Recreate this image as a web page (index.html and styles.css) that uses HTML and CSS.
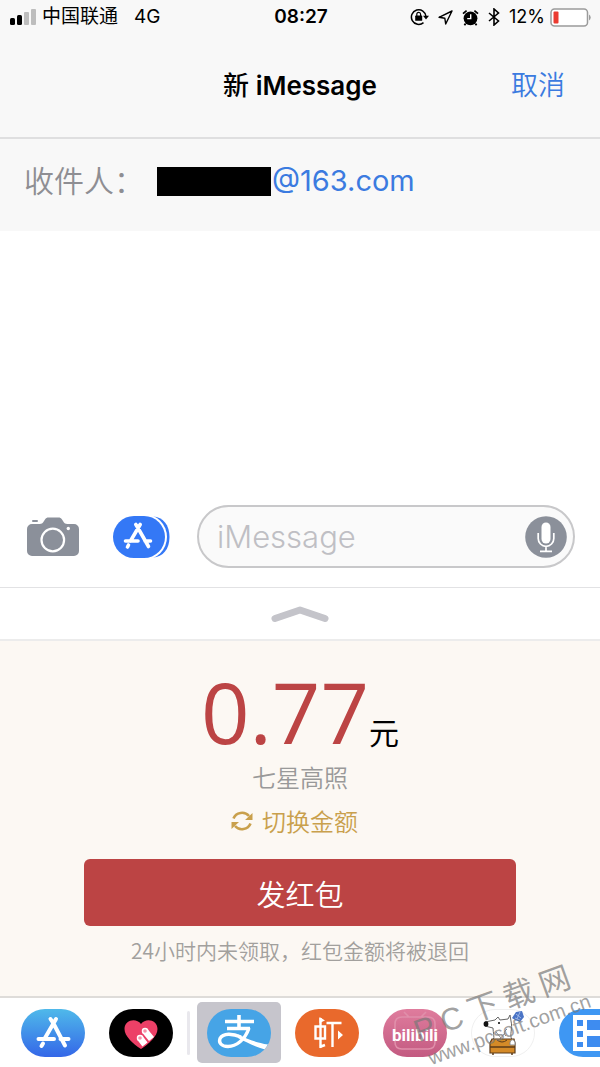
FILE: index.html
```html
<!DOCTYPE html>
<html lang="zh-CN">
<head>
    <meta charset="UTF-8">
    <meta name="viewport" content="width=device-width, initial-scale=1.0">
    <title>新 iMessage</title>
    <link rel="stylesheet" href="styles.css">
</head>
<body>
    <div class="status">
        <div class="status-left">
            <svg width="26" height="16" viewBox="0 0 26 16">
                <rect x="0" y="9" width="5" height="7" rx="1.5" fill="#000"/>
                <rect x="7" y="6" width="5" height="10" rx="1.5" fill="#000"/>
                <rect x="14" y="3" width="5" height="13" rx="1" fill="#bdbdbd"/>
                <rect x="21" y="0" width="5" height="16" rx="1" fill="#bdbdbd"/>
            </svg>
            <span>中国联通</span>
            <span class="network">4G</span>
        </div>
        <span class="time">08:27</span>
        <div class="status-right">
            <svg width="19" height="18" viewBox="0 0 19 18" fill="none" stroke="#000" stroke-width="1.5">
                <path d="M13.5 14.6A7.3 7.3 0 1 1 16 8.5"/>
                <path d="M13 7.8h6l-3 3.8z" fill="#000" stroke="none"/>
                <rect x="5.2" y="7.6" width="7" height="5.2" rx=".6" fill="#000" stroke="none"/>
                <path d="M6.8 8V6.2a1.9 1.9 0 0 1 3.8 0V8" stroke-width="1.2"/>
            </svg>
            <svg width="15" height="15" viewBox="0 0 15 15" fill="none" stroke="#000" stroke-width="1.4" stroke-linejoin="round">
                <path d="M14 1L1 7.3l5.8.9.9 5.8z"/>
            </svg>
            <svg width="17" height="17" viewBox="0 0 17 17">
                <circle cx="8.5" cy="9.3" r="6.9"/>
                <path d="M1 4.6L4.6 1.6M12.4 1.6L16 4.6M3.6 14.6L2.4 16.2M13.4 14.6L14.6 16.2" stroke="#000" stroke-width="1.8"/>
                <path d="M8.7 5.2V9.6H5.2" fill="none" stroke="#fff" stroke-width="1.4"/>
            </svg>
            <svg width="12" height="18" viewBox="0 0 12 18" fill="none" stroke="#000" stroke-width="1.6">
                <path d="M1 5l9.500 8L6 17V1l4.500 4L1 13"/>
            </svg>
            <span>12%</span>
            <svg class="battery" width="42" height="19" viewBox="0 0 42 19">
                <rect x="1" y="1" width="36.5" height="17" rx="3.5" fill="#fff" stroke="#9b9b9b" stroke-width="1.5"/>
                <rect x="3.5" y="3.5" width="5" height="12" rx="1" fill="#eb3b31"/>
                <path d="M39 6.5a3.5 3.5 0 0 1 0 6z" fill="#9b9b9b"/>
            </svg>
        </div>
    </div>

    <header class="nav">
        <h1><span>新</span> iMessage</h1>
        <button class="cancel">取消</button>
    </header>

    <div class="recipient">
        <span class="recipient-label">收件人：</span>
        <span class="redacted"></span>
        <a href="#">@163.com</a>
    </div>

    <main class="messages"></main>

    <form class="composer">
        <button type="button" aria-label="相机">
            <svg width="52" height="40" viewBox="0 0 52 40">
                <path d="M5 7H12.500C15 7 16 6 17 4L18 2.500C19 1 20 .5 21.500.5H31.500C33 .5 34 1 35 2.500L36 4C37 6 38 7 40.500 7H47A5 5 0 0 1 52 12V34A5 5 0 0 1 47 39H5A5 5 0 0 1 0 34V12A5 5 0 0 1 5 7Z" fill="#8b909a"/>
                <rect x="5" y="3" width="6" height="2" rx="1" fill="#8b909a"/>
                <circle cx="25.8" cy="23" r="11.3" fill="none" stroke="#fff" stroke-width="2.2"/>
                <circle cx="41.3" cy="11.5" r="1.7" fill="#fff"/>
            </svg>
        </button>
        <button type="button" aria-label="应用">
            <svg width="58" height="44" viewBox="0 0 58 44">
                <path d="M40 1.500C50 2 56.500 10 56.500 22S50 42 40 42.500z" fill="#3478f6"/>
                <rect x="-1" y="-1" width="55" height="46" rx="23" fill="#fff"/>
                <rect x="0" y="1" width="52" height="42" rx="21" fill="#3478f6"/>
                <path d="M22.800 9.500L25 13L35.500 31.500M27.200 9.500L17.500 26M12.500 26H25M32 26H37.500M15.500 30L14.500 32" fill="none" stroke="#fff" stroke-width="3.6" stroke-linecap="round"/>
            </svg>
        </button>
        <div class="field">
            <input type="text" placeholder="iMessage" aria-label="iMessage">
            <button type="button" aria-label="语音">
                <svg width="42" height="42" viewBox="0 0 42 42">
                    <circle cx="21" cy="21" r="20.8" fill="#8b909a"/>
                    <rect x="16.5" y="6.5" width="9" height="21" rx="4.5" fill="#fff"/>
                    <path d="M13.200 17v5.500a7.800 7.800 0 0 0 15.600 0V17M21 30.500V35M15 35.300H27" fill="none" stroke="#fff" stroke-width="1.7"/>
                </svg>
            </button>
        </div>
    </form>

    <button class="handle" aria-label="展开">
        <svg width="58" height="18" viewBox="0 0 58 18">
            <path d="M4 13.500L29 5L54 13.500" fill="none" stroke="#c4c4ca" stroke-width="7" stroke-linecap="round" stroke-linejoin="round"/>
        </svg>
    </button>

    <section class="packet">
        <p class="amount">0.77<span>元</span></p>
        <p class="blessing">七星高照</p>
        <button class="switch">
            <svg width="22" height="22" viewBox="0 0 22 22" fill="none" stroke="#c9a04c" stroke-width="2.6">
                <path d="M2.500 8.500A9 8.500 0 0 1 18 6M19.500 13.500A9 8.500 0 0 1 4 16"/>
                <path d="M21.500 3V10H14zM.5 19V12H8z" fill="#c9a04c" stroke="none"/>
            </svg>
            切换金额
        </button>
        <button class="send">发红包</button>
        <p class="note">24小时内未领取，红包金额将被退回</p>
    </section>

    <nav class="tray">
        <a class="app" href="#" aria-label="App Store">
            <svg width="64" height="48" viewBox="0 0 64 48">
                <defs>
                    <linearGradient id="store" x1="0" y1="0" x2="0" y2="1">
                        <stop offset="0" stop-color="#4fb9ea"/>
                        <stop offset="1" stop-color="#3467e8"/>
                    </linearGradient>
                </defs>
                <rect width="64" height="48" rx="24" fill="url(#store)"/>
                <path d="M29.500 10L32.500 14.500L44 36.500M35 10L24 29M17.500 30H33M39.500 30H47.500M22 34.500L20.500 37" fill="none" stroke="#fff" stroke-width="4" stroke-linecap="round"/>
            </svg>
        </a>
        <a class="app" href="#" aria-label="Digital Touch">
            <svg width="64" height="48" viewBox="0 0 64 48">
                <rect width="64" height="48" rx="24" fill="#000"/>
                <path d="M32 40C24 35 15.500 27 15.500 20C15.500 11 27 8.500 32 15C37 8.500 48.500 11 48.500 20C48.500 27 40 35 32 40z" fill="#ec4067"/>
                <g stroke="#fff" stroke-width="6.5">
                    <path d="M31 29L36 35.500M36 22L42.500 30"/>
                    <path d="M31 29h.1M36 22h.1" stroke-linecap="round"/>
                </g>
                <circle cx="31" cy="29" r="1.8" fill="#f494aa"/>
                <circle cx="36" cy="22" r="1.8" fill="#f494aa"/>
            </svg>
        </a>
        <span class="divider"></span>
        <a class="app selected" href="#" aria-label="支付宝">
            <svg width="64" height="48" viewBox="0 0 64 48">
                <defs>
                    <clipPath id="pill"><rect width="64" height="48" rx="24"/></clipPath>
                </defs>
                <rect width="64" height="48" rx="24" fill="#46a4e6"/>
                <g clip-path="url(#pill)" fill="none" stroke="#fff">
                    <path d="M32 6V19M18 12.500H47M20 19.500H43" stroke-width="3.6"/>
                    <path d="M42 19C38 31 29 37.500 21 37.500C14 37.500 11.500 33.500 13 29.500C16 23.500 26 24.500 34 28" stroke-width="3.4"/>
                    <path d="M31 25.500C40 30 49 33.500 61 35.500L58 40.500C48 38 39 33 31 29z" fill="#fff" stroke="none"/>
                </g>
            </svg>
        </a>
        <a class="app" href="#" aria-label="虾米音乐">
            <svg width="64" height="48" viewBox="0 0 64 48">
                <rect width="64" height="48" rx="24" fill="#e9692c"/>
                <path d="M25.500 9V39M20.500 17.500H30V29.500H20.500zM24.500 38L30 36M31.500 14H46.500M37.500 14V38" fill="none" stroke="#fff" stroke-width="2.4"/>
                <path d="M24.500 8L30 11.500L24.500 14zM43 21.500L48 26L43 30.500z" fill="#fff"/>
            </svg>
        </a>
        <a class="app" href="#" aria-label="bilibili">
            <svg width="64" height="48" viewBox="0 0 64 48">
                <defs>
                    <linearGradient id="bili" x1="0" y1="0" x2="0" y2="1">
                        <stop offset="0" stop-color="#df7c9d"/>
                        <stop offset="1" stop-color="#c35a81"/>
                    </linearGradient>
                </defs>
                <rect width="64" height="48" rx="24" fill="url(#bili)"/>
                <path d="M21 3L26 8M43 3L38 8M19 8H45Q52 8 52 15V33Q52 40 45 40H19Q12 40 12 33V15Q12 8 19 8z" fill="none" stroke="#e08faa" stroke-width="1.6"/>
                <text class="bili-text" x="32" y="32" text-anchor="middle">bilibili</text>
            </svg>
        </a>
        <a class="app" href="#" aria-label="贴纸">
            <svg width="64" height="48" viewBox="0 0 64 48">
                <rect x=".5" y=".5" width="63" height="47" rx="23.5" fill="#fff" stroke="#f0f0f0"/>
                <path d="M14 13L24 11L27 8L29 11L37 10L39 6L40 12C42 20 38 25 41 31L22 32C24 27 22 24 22 19L14 17z" fill="#fff" stroke="#666" stroke-width="1"/>
                <ellipse cx="15" cy="15" rx="2.4" ry="2.8" fill="#111"/>
                <circle cx="28" cy="14" r="1"/>
                <path d="M25 23L30 29M34 24L28 31M36 20Q31 24 35 27" fill="none" stroke="#888"/>
                <path d="M41 9L45 3L51 2L53 8L49 13L44 11z" fill="#4a74c6"/>
                <path d="M44 9L49 11M45 5l5 4M49 3l-3 7" fill="none" stroke="#9bb5e6"/>
                <path d="M21 30H43L44 34V44H19V34z" fill="#d58a27" stroke="#5c3b19" stroke-width="1.2"/>
                <path d="M19 38H44M22 44v2M41 44v2" stroke="#5c3b19" stroke-width="1.5"/>
                <path d="M26 31q5 4 10 0" fill="none" stroke="#5c3b19"/>
                <path d="M39 36C38 29 45 29 44 36z" fill="#fff" stroke="#888"/>
            </svg>
        </a>
        <a class="app" href="#" aria-label="视频">
            <svg width="64" height="48" viewBox="0 0 64 48">
                <rect width="64" height="48" rx="24" fill="#3e97f3"/>
                <rect x="14" y="6" width="36" height="36" fill="#fff"/>
                <path d="M18 11h6v6h-6zM18 22h6v6h-6zM18 33h6v5h-6zM28 11h18v10H28zM28 27h18v11H28z" fill="#3e8cf0"/>
            </svg>
        </a>
        <div class="watermark">
            <div class="watermark-name"><span>P</span><span>C</span><span>下</span><span>载</span><span>网</span></div>
            <div class="watermark-url">www.pcsoft.com.cn</div>
        </div>
    </nav>
</body>
</html>
```
FILE: styles.css
```css
* {
    margin: 0;
    padding: 0;
    box-sizing: border-box;
}

body {
    min-height: 100vh;
    display: flex;
    flex-direction: column;
    background: #fff;
    color: #000;
    font-family: 'Inter', 'Noto Sans CJK SC', sans-serif;
    overflow-x: hidden;
}

button {
    border: none;
    background: none;
    font: inherit;
    cursor: pointer;
}

a {
    text-decoration: none;
}

svg {
    display: block;
    flex-shrink: 0;
}

.status {
    display: grid;
    grid-template-columns: 1fr auto 1fr;
    align-items: center;
    height: 34px;
    padding: 0 8px 0 10px;
    background: #f8f8f8;
    font-size: 19px;
    line-height: 24px;
}

.status-left,
.status-right {
    display: flex;
    align-items: center;
    gap: 6px;
}

.status-right {
    justify-content: flex-end;
    gap: 9px;
    font-size: 18px;
}

.network {
    margin-left: 10px;
}

.battery {
    margin-left: -4px;
}

.time {
    font-weight: 600;
}

.nav {
    display: grid;
    grid-template-columns: 1fr auto 1fr;
    align-items: center;
    height: 105px;
    padding: 0 35px;
    background: #f8f8f8;
    border-bottom: 2px solid #dfdfe0;
}

.nav h1 {
    grid-column: 2;
    font-size: 26px;
    font-weight: 600;
    line-height: 32px;
}

.nav h1 span {
    font-weight: 500;
}

.cancel {
    justify-self: end;
    color: #3b7be0;
    font-size: 27px;
    font-weight: 350;
    line-height: 32px;
}

.recipient {
    display: flex;
    align-items: center;
    height: 92px;
    padding: 0 24px 8px;
    background: #f8f8f8;
    font-size: 29px;
    line-height: 36px;
}

.recipient-label {
    color: #8e8e93;
    font-size: 30px;
    font-weight: 350;
}

.redacted {
    width: 114px;
    height: 29px;
    margin: 0 1px 0 13px;
    background: #000;
}

.recipient a {
    color: #3b7be0;
}

.messages {
    flex: 1;
}

.composer {
    display: flex;
    align-items: center;
    gap: 26px;
    padding: 0 25px 19px 27px;
    border-bottom: 1px solid #e2e2e4;
}

.composer > button:first-child {
    margin-right: 8px;
}

.field {
    flex: 1;
    min-width: 0;
    display: flex;
    align-items: center;
    height: 63px;
    padding: 0 6px 0 18px;
    border: 2px solid #c8c8ca;
    border-radius: 32px;
    background: #fafafa;
}

.field input {
    flex: 1;
    min-width: 0;
    border: none;
    outline: none;
    background: none;
    font: 300 31px 'Inter', 'Noto Sans CJK SC', sans-serif;
}

.field input::placeholder {
    color: #bfbfc4;
}

.handle {
    display: flex;
    justify-content: center;
    align-items: center;
    height: 51px;
}

.packet {
    display: flex;
    flex-direction: column;
    align-items: center;
    padding: 22px 84px 30px;
    background: #fcf8f3;
    border-top: 2px solid #ececec;
    font-family: 'Noto Sans CJK SC', sans-serif;
    font-weight: 350;
}

.amount {
    color: #bc4444;
    font-family: 'Open Sans', 'Noto Sans CJK SC', sans-serif;
    font-size: 85px;
    font-weight: 400;
    line-height: 96px;
}

.amount span {
    color: #000;
    font-size: 30px;
    line-height: 30px;
}

.blessing {
    color: #999;
    font-size: 24px;
    line-height: 36px;
}

.switch {
    display: flex;
    align-items: center;
    gap: 9px;
    margin: 8px 0 20px;
    padding-right: 11px;
    color: #c9a04c;
    font-size: 24px;
    line-height: 36px;
}

.send {
    align-self: stretch;
    height: 67px;
    border-radius: 6px;
    background: #bc4444;
    color: #fff;
    font-size: 29px;
}

.note {
    margin-top: 8px;
    color: #a2a09d;
    font-size: 21px;
    line-height: 32px;
}

.tray {
    position: relative;
    display: flex;
    align-items: center;
    gap: 4px;
    height: 71px;
    padding-left: 11px;
    border-top: 2px solid #dedcd9;
    background: #fff;
}

.app {
    display: flex;
    justify-content: center;
    align-items: center;
    flex-shrink: 0;
    width: 84px;
    height: 61px;
    border-radius: 5px;
}

/* the last app scrolls off the side */
.app:nth-last-child(2) {
    flex: 1;
    min-width: 0;
    justify-content: flex-start;
    padding-left: 10px;
    overflow: hidden;
}

.selected {
    background: #c6c5cc;
}

.divider {
    flex-shrink: 0;
    width: 3px;
    height: 44px;
    margin-right: 3px;
    border-radius: 2px;
    background: #e9e8ed;
}

.bili-text {
    fill: #fff;
    font-family: 'Roboto', sans-serif;
    font-size: 17px;
    font-weight: 700;
}

/* site stamp laid over the tray */
.watermark {
    position: absolute;
    right: 10px;
    bottom: 24px;
    width: 176px;
    color: rgba(120, 120, 120, 0.7);
    font-family: 'Liberation Sans', 'Noto Sans CJK SC', sans-serif;
    transform: rotate(-20deg);
    pointer-events: none;
}

.watermark-name {
    display: flex;
    gap: 7px;
    font-size: 31px;
    line-height: 34px;
}

.watermark-url {
    padding-left: 4px;
    font-size: 20px;
    line-height: 24px;
    white-space: nowrap;
}
```
